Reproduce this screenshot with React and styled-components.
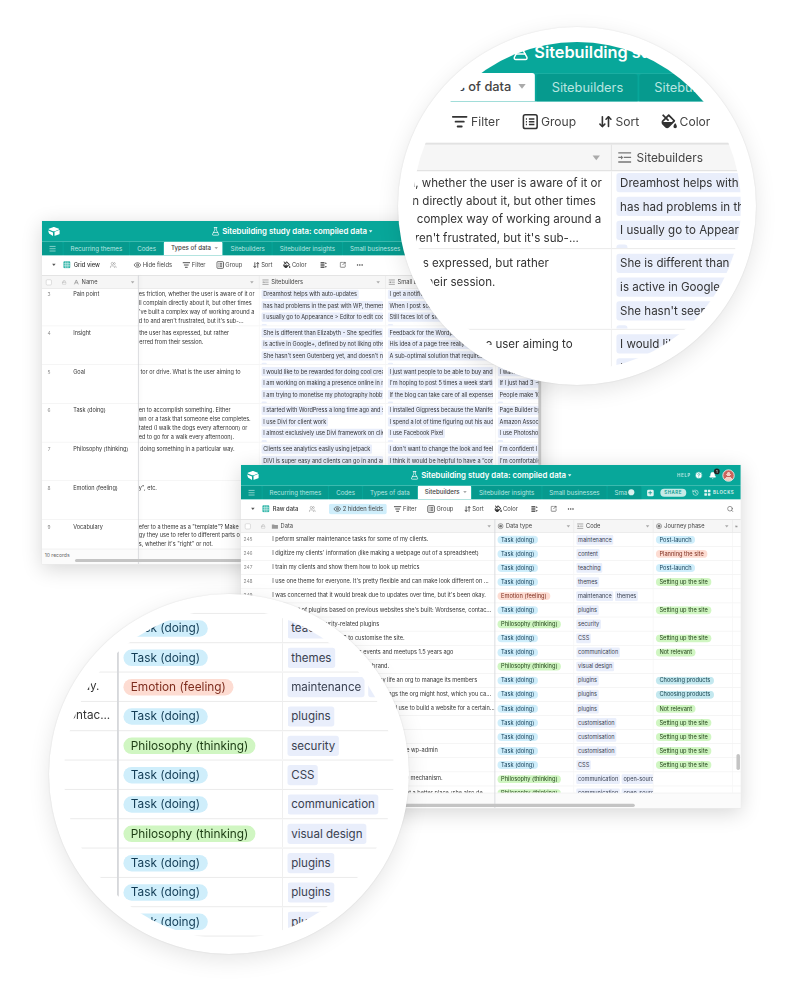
import styled, { createGlobalStyle } from "styled-components";
import {
  ArrowDownUp,
  Bell,
  CircleHelp,
  Ellipsis,
  Eye,
  FlaskConical,
  History,
  ListFilter,
  Lock,
  Menu,
  Plus,
  Search,
  SquareArrowOutUpRight,
  Users,
} from "lucide-react";
import { FaFillDrip } from "react-icons/fa";

const GlobalStyle = createGlobalStyle`
  html, body {
    margin: 0;
    background: #fff;
  }
  * {
    box-sizing: border-box;
  }
`;

const TEAL = "#08a79a";
const TAB_TEAL = "#069a8e";

const Logo = () => (
  <svg width="28" height="22" viewBox="0 0 28 22" fill="#fff">
    <path d="M12 1.200 2.500 4.800c-.7.300-.7 1.200 0 1.500l9.500 3.900c1.300.5 2.700.5 4 0l9.500-3.900c.7-.3.7-1.200 0-1.500L16 1.200c-1.300-.5-2.700-.5-4 0z" />
    <path d="M15.500 12.200v8c0 .5.500.8 1 .6l9.800-3.800c.4-.2.700-.5.700-1V8.300c0-.5-.5-.8-1-.6l-9.800 3.500c-.4.200-.7.500-.7 1z" />
    <path d="M1.200 8.500 12 13v7.200c0 .5-.6.800-1 .5L3 15.600 1 9.400c-.1-.5 0-.8.200-.9z" />
  </svg>
);

const GridIcon = () => (
  <svg width="17" height="17" viewBox="0 0 18 18">
    <rect x="0.500" y="0.500" width="17" height="17" rx="3" fill="#2fb5a8" />
    <path d="M1 6.500h16M1 11.500h16M6.500 1v16M11.500 1v16" stroke="#fff" strokeWidth="1.300" />
  </svg>
);

const GroupIcon = () => (
  <svg width="18" height="18" viewBox="0 0 18 18" fill="none" stroke="#333" strokeWidth="1.700">
    <rect x="1.500" y="1.500" width="15" height="15" rx="2" />
    <path d="M7.500 6h6M7.500 9h6M7.500 12h6M4.200 6h1.200M4.200 9h1.200M4.200 12h1.200" />
  </svg>
);

const RowHeightIcon = () => (
  <svg width="16" height="16" viewBox="0 0 16 16" fill="#444">
    <rect x="1" y="1.500" width="9" height="3" />
    <rect x="1" y="6.500" width="9" height="3" />
    <rect x="1" y="11.500" width="9" height="3" />
    <path d="M13 1.500 15.500 5h-5zM13 14.500 10.500 11h5z" />
  </svg>
);

const LinesIcon = () => (
  <svg width="16" height="14" viewBox="0 0 16 14" stroke="#777" strokeWidth="1.400" fill="#777">
    <path d="M1 2h14M7 7h8M1 12h14M1 7h4" fill="none" />
    <path d="M4 4.800 6.400 7 4 9.200z" stroke="none" />
  </svg>
);

const SelectIcon = () => (
  <svg width="14" height="14" viewBox="0 0 14 14">
    <circle cx="7" cy="7" r="5.700" fill="none" stroke="#777" strokeWidth="1.600" />
    <circle cx="7" cy="7" r="3" fill="#777" />
  </svg>
);

const TextIcon = () => (
  <svg width="14" height="14" viewBox="0 0 14 14" fill="none" stroke="#777" strokeWidth="1.300">
    <path d="M2.500 12 7 2l4.500 10M4.200 8.500h5.600" />
  </svg>
);

const AttachmentIcon = () => (
  <svg width="16" height="14" viewBox="0 0 16 14" fill="#999">
    <path d="M1 3h5l1.500 1.500H15V13H1z" />
  </svg>
);

const Stage = styled.main`
  position: relative;
  width: 800px;
  height: 1000px;
  overflow: hidden;
  background: #fff;
`;

const Win = styled.section`
  position: absolute;
  left: ${(p) => p.$x}px;
  top: ${(p) => p.$y}px;
  z-index: ${(p) => p.$z || 0};
  width: 1136px;
  height: 780px;
  display: flex;
  flex-direction: column;
  overflow: hidden;
  background: #fff;
  transform: scale(${(p) => p.$scale});
  transform-origin: 0 0;
  outline: 1px solid #e4e4e4;
  box-shadow: 0 10px 44px rgba(0, 0, 0, 0.16);
  filter: blur(${(p) => p.$blur}px);
  font-family: Inter, "Liberation Sans", sans-serif;
  font-size: 12.600px;
  color: #333;
`;

const TopBar = styled.header`
  height: 47px;
  flex: none;
  background: ${TEAL};
  color: #fff;
  display: grid;
  grid-template-columns: 1fr auto 1fr;
  align-items: center;
  padding: 0 14px 0 13px;
`;

const Title = styled.h1`
  margin: 0;
  display: flex;
  align-items: center;
  gap: 4px;
  font-size: 17.800px;
  font-weight: 600;
  white-space: nowrap;
`;

const TopActions = styled.div`
  display: flex;
  align-items: center;
  justify-content: flex-end;
  gap: 13px;
`;

const HelpLabel = styled.span`
  margin-right: -5px;
  font-size: 10px;
  font-weight: 600;
  letter-spacing: 1.500px;
  opacity: 0.75;
`;

const BellWrap = styled.span`
  position: relative;
  display: flex;
`;

const BellBadge = styled.span`
  position: absolute;
  top: -7px;
  right: -7px;
  width: 13px;
  height: 13px;
  border-radius: 50%;
  background: #222;
  color: #fff;
  font-size: 9px;
  line-height: 13px;
  text-align: center;
`;

const Avatar = styled.span`
  width: 28px;
  height: 28px;
  border-radius: 50%;
  border: 2px solid #e9f3ef;
  background: radial-gradient(circle at 50% 38%, #f0cfc4 0 24%, transparent 25%),
    radial-gradient(circle at 50% 105%, #f0cfc4 0 38%, transparent 39%), #c9635c;
`;

const TabBar = styled.nav`
  height: 31px;
  flex: none;
  background: ${TEAL};
  display: flex;
  align-items: flex-end;
  gap: 2px;
  overflow: hidden;
`;

const MenuTab = styled.div`
  width: 47px;
  height: 30px;
  flex: none;
  background: ${TAB_TEAL};
  border-radius: 0 3px 0 0;
  color: #c4ebe6;
  display: flex;
  align-items: center;
  justify-content: center;
`;

const Tab = styled.div`
  height: ${(p) => (p.$active ? 31 : 30)}px;
  flex: none;
  display: flex;
  align-items: center;
  gap: 8px;
  padding: 0 ${(p) => (p.$active ? 10 : 16)}px 2px 16px;
  border-radius: 3px 3px 0 0;
  font-size: 14px;
  white-space: nowrap;
  background: ${(p) => (p.$active ? "#fff" : TAB_TEAL)};
  color: ${(p) => (p.$active ? "#444" : "#b9e6e1")};
  font-weight: ${(p) => (p.$active ? 500 : 400)};
`;

const OverflowDot = styled.span`
  width: 14px;
  height: 14px;
  margin-left: -6px;
  border-radius: 50%;
  background: #d8f1ee;
`;

const TabActions = styled.div`
  margin-left: auto;
  height: 30px;
  flex: none;
  display: flex;
  align-items: center;
  gap: 12px;
  padding: 0 15px 0 10px;
  color: #e2f5f3;
  font-size: 10px;
  font-weight: 600;
  letter-spacing: 1.300px;
`;

const AddTab = styled.span`
  width: 15px;
  height: 15px;
  border-radius: 3px;
  background: #e2f5f3;
  color: ${TAB_TEAL};
  display: flex;
  align-items: center;
  justify-content: center;
`;

const SharePill = styled.span`
  width: 59px;
  height: 18px;
  margin: 0 1px 0 3px;
  border-radius: 9px;
  background: #c6ebe7;
  color: ${TAB_TEAL};
  line-height: 18px;
  text-align: center;
`;

const BlocksDots = styled.span`
  display: grid;
  grid-template-columns: 6px 6px;
  gap: 2px;
  margin-right: -6px;
  & > i {
    height: 6px;
    background: #e2f5f3;
    border-radius: 1px;
  }
`;

const ToolBar = styled.div`
  height: 45px;
  flex: none;
  display: flex;
  align-items: center;
  gap: 8px;
  padding: 0 16px 2px 23px;
  color: #444;
  font-size: 13.200px;
  white-space: nowrap;
`;

const ViewPicker = styled.div`
  width: 169px;
  flex: none;
  display: flex;
  align-items: center;
  color: #333;
  font-weight: 500;
`;

const ViewName = styled.span`
  width: 82px;
  margin-left: 7px;
`;

const ToolItem = styled.div`
  height: 24px;
  display: flex;
  align-items: center;
  gap: 3px;
  margin-left: ${(p) => (p.$on ? 0 : 0)}px;
  padding: 0 ${(p) => p.$pad ?? 8}px 0 ${(p) => (p.$on ? 10 : p.$pad ?? 8)}px;
  border-radius: 4px;
  background: ${(p) => (p.$on ? "#cfeefb" : "transparent")};
`;

const SearchSlot = styled.div`
  margin-left: auto;
  display: flex;
  color: #555;
`;

const Caret = styled.span`
  flex: none;
  width: 0;
  height: 0;
  margin-left: ${(p) => (p.$push ? "auto" : 0)};
  margin-right: ${(p) => p.$right || 0}px;
  border-left: 4px solid transparent;
  border-right: 4px solid transparent;
  border-top: 5px solid ${(p) => p.$color || "#aaa"};
`;

const HeaderRow = styled.div`
  height: 31px;
  flex: none;
  display: flex;
  background: #f6f6f6;
  border-top: 2px solid #e2e2e2;
  border-bottom: 1px solid #dcdcdc;
  font-size: 13px;
`;

const HeaderCell = styled.div`
  width: ${(p) => p.$w}px;
  flex: none;
  display: flex;
  align-items: center;
  gap: 5px;
  padding: 0 ${(p) => p.$pad ?? 6}px;
  border-right: 1px solid ${(p) => (p.$plain ? "transparent" : "#e2e2e2")};
  color: #444;
  white-space: nowrap;
  overflow: hidden;
`;

const CheckBox = styled.span`
  width: 13px;
  height: 13px;
  flex: none;
  margin-left: 3px;
  margin-right: 18px;
  border: 1.500px solid #bbb;
  border-radius: 3px;
  background: #fff;
`;

const HeadLock = styled(Lock)`
  flex: none;
  margin-right: ${(p) => p.$right || 0}px;
`;

const Body = styled.div`
  flex: 1;
  min-height: 0;
  overflow: hidden;
`;

const RowList = styled.div`
  margin-top: ${(p) => p.$offset || 0}px;
`;

const Row = styled.div`
  height: ${(p) => p.$h}px;
  display: flex;
  border-bottom: 1.500px solid #e9e9e9;
  overflow: hidden;
`;

const NumCell = styled.div`
  width: 32px;
  flex: none;
  margin-right: 31px;
  padding-top: ${(p) => p.$top || 0}px;
  text-align: center;
  font-size: 11px;
  line-height: ${(p) => p.$lh}px;
  color: #8a8a8a;
`;

const NameCell = styled.div`
  width: 156px;
  flex: none;
  padding: 6px 8px;
  line-height: 20px;
  color: #333;
`;

const TextCell = styled.div`
  width: ${(p) => p.$w}px;
  flex: none;
  padding: 6px 0 0 1px;
  border-right: 1px solid #eee;
  overflow: hidden;
  line-height: 20px;
  white-space: nowrap;
`;

const TextLine = styled.span`
  display: block;
  padding-left: ${(p) => p.$indent || 0}px;
`;

const LinkCell = styled.div`
  width: ${(p) => p.$w}px;
  flex: none;
  display: flex;
  flex-direction: column;
  align-items: flex-start;
  gap: 5px;
  padding: 5px 5px;
  border-right: 1px solid #eee;
  overflow: hidden;
`;

const LinkPill = styled.span`
  max-width: 100%;
  height: 21px;
  flex: none;
  padding: 0 4px;
  border-radius: 3px;
  background: #e9eefb;
  line-height: 21px;
  white-space: nowrap;
  overflow: hidden;
  color: #333;
`;

const DataCell = styled.div`
  width: 514px;
  flex: none;
  padding: 0 8px;
  font-size: 12.750px;
  line-height: 30px;
  white-space: nowrap;
  overflow: hidden;
  color: #333;
`;

const TagCell = styled.div`
  width: 180px;
  flex: none;
  display: flex;
  align-items: center;
  gap: 4px;
  padding: 0 ${(p) => p.$pad}px;
  border-right: 1px solid #eee;
  overflow: hidden;
`;

const toneColors = {
  blue: ["#cfeefb", "#123c55"],
  green: ["#d0f6c2", "#1d3d14"],
  red: ["#fddcd2", "#7e2d1e"],
  teal: ["#c3e8ef", "#123f4a"],
};

const Chip = styled.span`
  height: 18px;
  flex: none;
  padding: 0 8px;
  border-radius: 9px;
  font-size: 12.900px;
  line-height: 18px;
  white-space: nowrap;
  background: ${(p) => toneColors[p.$tone][0]};
  color: ${(p) => toneColors[p.$tone][1]};
`;

const CodePill = styled.span`
  height: 22px;
  flex: none;
  padding: 0 4px;
  border-radius: 3px;
  background: #e9eefb;
  line-height: 22px;
  white-space: nowrap;
  color: #3a4150;
`;

const Footer = styled.footer`
  height: 35px;
  flex: none;
  padding: 6px;
  background: #fbfbfb;
  border-top: 1px solid #e6e6e6;
  color: #666;
  font-size: 11.500px;
`;

const FrozenEdge = styled.div`
  position: absolute;
  left: ${(p) => p.$x}px;
  top: 123px;
  bottom: 0;
  width: 1.500px;
  background: #d6d8db;
  box-shadow: ${(p) => (p.$soft ? "3px 0 8px rgba(0, 0, 0, 0.08)" : "none")};
`;

const ScrollThumb = styled.div`
  position: absolute;
  left: ${(p) => p.$x}px;
  top: ${(p) => p.$y}px;
  width: ${(p) => p.$w}px;
  height: ${(p) => p.$h}px;
  border-radius: 4px;
  background: #c4c4c4;
`;

const Lens = styled.div`
  position: absolute;
  left: ${(p) => p.$x}px;
  top: ${(p) => p.$y}px;
  z-index: 5;
  width: ${(p) => p.$size}px;
  height: ${(p) => p.$size}px;
  padding: 15px;
  border-radius: 50%;
  background: #fff;
  box-shadow: 0 0 2px rgba(0, 0, 0, 0.12), 0 6px 22px rgba(0, 0, 0, 0.1);
`;

const LensView = styled.div`
  position: relative;
  width: 100%;
  height: 100%;
  border-radius: 50%;
  overflow: hidden;
`;

const tabNames = ["Recurring themes", "Codes", "Types of data", "Sitebuilders", "Sitebuilder insights", "Small businesses"];

const Header = ({ active }) => (
  <>
    <TopBar>
      <Logo />
      <Title>
        <FlaskConical size={21} strokeWidth={1.800} />
        <span>Sitebuilding study data: compiled data</span>
        <Caret $color="#e8f7f5" />
      </Title>
      <TopActions>
        <HelpLabel>HELP</HelpLabel>
        <CircleHelp size={19} fill="#fff" stroke={TEAL} />
        <BellWrap>
          <Bell size={18} fill="#fff" strokeWidth={1.500} />
          <BellBadge>1</BellBadge>
        </BellWrap>
        <Avatar />
      </TopActions>
    </TopBar>
    <TabBar>
      <MenuTab>
        <Menu size={18} />
      </MenuTab>
      {tabNames.map((name) => (
        <Tab key={name} $active={name === active}>
          {name}
          {name === active && <Caret />}
        </Tab>
      ))}
      <Tab>
        Sma
        <OverflowDot />
      </Tab>
      <TabActions>
        <AddTab>
          <Plus size={12} strokeWidth={3.500} />
        </AddTab>
        <SharePill>SHARE</SharePill>
        <History size={16} />
        <BlocksDots>
          <i />
          <i />
          <i />
          <i />
        </BlocksDots>
        <span>BLOCKS</span>
      </TabActions>
    </TabBar>
  </>
);

const Tools = ({ view, hidden, withSearch }) => (
  <ToolBar>
    <ViewPicker>
      <Caret $color="#555" $right={17} />
      <GridIcon />
      <ViewName>{view}</ViewName>
      <Users size={16} color="#999" />
    </ViewPicker>
    <ToolItem $on={hidden}>
      <Eye size={18} />
      {hidden ? "2 hidden fields" : "Hide fields"}
    </ToolItem>
    <ToolItem>
      <ListFilter size={18} strokeWidth={2.600} color="#333" />
      Filter
    </ToolItem>
    <ToolItem>
      <GroupIcon />
      Group
    </ToolItem>
    <ToolItem>
      <ArrowDownUp size={16} strokeWidth={2.600} color="#333" />
      Sort
    </ToolItem>
    <ToolItem>
      <FaFillDrip size={17} color="#333" />
      Color
    </ToolItem>
    <ToolItem $pad={14}>
      <RowHeightIcon />
    </ToolItem>
    <ToolItem $pad={6}>
      <SquareArrowOutUpRight size={15} strokeWidth={2.200} />
    </ToolItem>
    <ToolItem $pad={8}>
      <Ellipsis size={18} />
    </ToolItem>
    {withSearch && (
      <SearchSlot>
        <Search size={16} />
      </SearchSlot>
    )}
  </ToolBar>
);

const typeRows = [
  { num: 3, name: "Pain point", lines: ["es friction, whether the user is aware of it or", "ll complain directly about it, but other times", "'ve built a complex way of working around a", "d to and aren't frustrated, but it's sub-..."],
    a: ["Dreamhost helps with auto-updates", "has had problems in the past with WP, themes and plugins", "I usually go to Appearance > Editor to edit code in the theme", "\u00a0"],
    b: ["I get a notification when something breaks on the site", "When I post something new it goes to social media", "Still faces lot of small issues with the theme", "\u00a0"],
    c: ["I spend too long on it", "It is hard to find", "Nothing works well", "\u00a0"] },
  { num: 4, name: "Insight", indent: 1, lines: ["the user has expressed, but rather", "erred from their session."],
    a: ["She is different than Elizabyth - She specifies what she wants", "is active in Google+, defined by not liking other networks", "She hasn't seen Gutenberg yet, and doesn't need it for now", "\u00a0"],
    b: ["Feedback for the Wordpress editor is that it is hard", "His idea of a page tree really helps to organise things", "A sub-optimal solution that requires a lot of manual work", "\u00a0"],
    c: ["There is no way to do this", "It takes a lot of time", "Page tree is better", "\u00a0"] },
  { num: 5, name: "Goal", indent: 4, lines: ["tor or drive. What is the user aiming to"],
    a: ["I would like to be rewarded for doing cool creative work", "I am working on making a presence online in my own town", "I am trying to monetise my photography hobby this year", "\u00a0"],
    b: ["I just want people to be able to buy and book online", "I'm hoping to post 5 times a week starting next month", "If the blog can take care of all expenses that is enough", "\u00a0"],
    c: ["I want a shop", "If I just had 3 -> 5 clients", "People make 10k from this", "\u00a0"] },
  { num: 6, name: "Task (doing)", lines: ["en to accomplish something. Either", "wn or a task that someone else completes.", "tated (I walk the dogs every afternoon) or", "ed to go for a walk every afternoon)."],
    a: ["I started with WordPress a long time ago and stayed since", "I use Divi for client work", "I almost exclusively use Divi framework on client sites", "\u00a0"],
    b: ["I installed Gigpress because the Manifest theme needed it", "I spend a lot of time figuring out his audience and posts", "I use Facebook Pixel", "\u00a0"],
    c: ["Page Builder by SiteOrigin", "Amazon Associates links", "I use Photoshop for this", "\u00a0"] },
  { num: 7, name: "Philosophy (thinking)", indent: 3, lines: ["doing something in a particular way."],
    a: ["Clients see analytics easily using jetpack", "DIVI is super easy and clients can go in and add pages", "I prefer to keep things simple for every client I have"],
    b: ["I don't want to change the look and feel of the site", "I think it would be helpful to have a \u201ccontent\u201d section", "Simple is better"],
    c: ["I'm confident I can do it", "I'm comfortable with it", "Fine"] },
  { num: 8, name: "Emotion (feeling)", lines: ["y\", etc."], a: [], b: [], c: [] },
  { num: 9, name: "Vocabulary", lines: ["efer to a theme as a \"template\"? Make", "gy they use to refer to different parts o", "s, whether it's \"right\" or not."], a: [], b: [], c: [] },
];

const TASK = ["blue", "Task (doing)"];
const THINK = ["green", "Philosophy (thinking)"];
const FEEL = ["red", "Emotion (feeling)"];
const SETUP = ["green", "Setting up the site"];
const POST = ["blue", "Post-launch"];
const PLAN = ["red", "Planning the site"];
const IRRELEVANT = ["green", "Not relevant"];
const CHOOSE = ["teal", "Choosing products"];

const dataRows = [
  [245, "I peform smaller maintenance tasks for some of my clients.", TASK, ["maintenance"], POST],
  [246, "I digitize my clients' information (like making a webpage out of a spreadsheet)", TASK, ["content"], PLAN],
  [247, "I train my clients and show them how to look up metrics", TASK, ["teaching"], POST],
  [248, "I use one theme for everyone. It's pretty flexible and can make look different on ...", TASK, ["themes"], SETUP],
  [249, "I was concerned that it would break due to updates over time, but it's been okay.", FEEL, ["maintenance", "themes"], null],
  [250, "Uses a set of plugins based on previous websites she's built: Wordsense, contac...", TASK, ["plugins"], SETUP],
  [251, "She also installs security-related plugins", THINK, ["security"], null],
  [252, "She uses some custom CSS to customise the site.", TASK, ["CSS"], SETUP],
  [253, "I started going to local WordPress events and meetups 1.5 years ago", TASK, ["communication"], IRRELEVANT],
  [254, "I like to keep the design clean and on brand.", THINK, ["visual design"], null],
  [255, "I set up a plugin that helps with day-to-day life an org to manage its members", TASK, ["plugins"], CHOOSE],
  [256, "I search for plugins related to events and things the org might host, which you ca...", TASK, ["plugins"], CHOOSE],
  [257, "I look through the directory to see what I would use to build a website for a certain...", TASK, ["plugins"], IRRELEVANT],
  [258, "I customise the header for each client", TASK, ["customisation"], SETUP],
  [259, "I customise the footer for each client", TASK, ["customisation"], SETUP],
  [260, "I customise the login page and the dashboard in the wp-admin", TASK, ["customisation"], SETUP],
  [261, "I add small tweaks through custom styles", TASK, ["CSS"], SETUP],
  [262, "WordPress has a really good and strong community mechanism.", THINK, ["communication", "open-source"], null],
  [263, "I wanted to help people and make the whole internet a better place (she also de...", THINK, ["communication", "open-source"], null],
];

const TypesWindow = (props) => (
  <Win {...props}>
    <Header active="Types of data" />
    <Tools view="Grid view" />
    <HeaderRow>
      <HeaderCell $w={219}>
        <CheckBox />
        <HeadLock size={11} color="#aaa" $right={10} />
        <TextIcon />
        Name
        <Caret $push $right={2} />
      </HeaderCell>
      <HeaderCell $w={275}>
        <Caret $push $right={6} />
      </HeaderCell>
      <HeaderCell $w={287}>
        <LinesIcon />
        Sitebuilders
        <Caret $push $right={6} />
      </HeaderCell>
      <HeaderCell $w={250}>
        <LinesIcon />
        Small businesses
        <Caret $push $right={6} />
      </HeaderCell>
      <HeaderCell $w={105} $plain>
        <LinesIcon />
      </HeaderCell>
    </HeaderRow>
    <Body>
      <RowList $offset={-3}>
        {typeRows.map((row) => (
          <Row key={row.num} $h={88}>
            <NumCell $lh={20} $top={6}>
              {row.num}
            </NumCell>
            <NameCell>{row.name}</NameCell>
            <TextCell $w={275}>
              {row.lines.map((line) => (
                <TextLine key={line} $indent={row.indent}>
                  {line}
                </TextLine>
              ))}
            </TextCell>
            <LinkCell $w={287}>
              {row.a.map((text, i) => (
                <LinkPill key={i}>{text}</LinkPill>
              ))}
            </LinkCell>
            <LinkCell $w={250}>
              {row.b.map((text, i) => (
                <LinkPill key={i}>{text}</LinkPill>
              ))}
            </LinkCell>
            <LinkCell $w={105}>
              {row.c.map((text, i) => (
                <LinkPill key={i}>{text}</LinkPill>
              ))}
            </LinkCell>
          </Row>
        ))}
      </RowList>
    </Body>
    <Footer>10 records</Footer>
    <FrozenEdge $x={218} $soft />
    <ScrollThumb $x={75} $y={768} $w={420} $h={7} />
    <ScrollThumb $x={1128} $y={340} $w={7} $h={300} />
  </Win>
);

const DataWindow = (props) => (
  <Win {...props}>
    <Header active="Sitebuilders" />
    <Tools view="Raw data" hidden withSearch />
    <HeaderRow>
      <HeaderCell $w={63} $plain>
        <CheckBox />
        <HeadLock size={11} color="#aaa" />
      </HeaderCell>
      <HeaderCell $w={514} $plain>
        <AttachmentIcon />
        Data
        <Caret $push $right={2} />
      </HeaderCell>
      <HeaderCell $w={180}>
        <SelectIcon />
        Data type
        <Caret $push $right={2} />
      </HeaderCell>
      <HeaderCell $w={180}>
        <LinesIcon />
        Code
        <Caret $push $right={2} />
      </HeaderCell>
      <HeaderCell $w={180}>
        <SelectIcon />
        Journey phase
        <Caret $push $right={2} />
      </HeaderCell>
      <HeaderCell $w={19} $plain>
        <AttachmentIcon />
      </HeaderCell>
    </HeaderRow>
    <Body>
      <RowList>
        {dataRows.map(([num, text, type, codes, phase]) => (
          <Row key={num} $h={32}>
            <NumCell $lh={30}>{num}</NumCell>
            <DataCell>{text}</DataCell>
            <TagCell $pad={6}>
              <Chip $tone={type[0]}>{type[1]}</Chip>
            </TagCell>
            <TagCell $pad={5}>
              {codes.map((code) => (
                <CodePill key={code}>{code}</CodePill>
              ))}
            </TagCell>
            <TagCell $pad={6}>{phase && <Chip $tone={phase[0]}>{phase[1]}</Chip>}</TagCell>
          </Row>
        ))}
      </RowList>
    </Body>
    <Footer />
    <FrozenEdge $x={576} />
    <ScrollThumb $x={80} $y={770} $w={815} $h={7} />
    <ScrollThumb $x={1126} $y={657} $w={8} $h={36} />
  </Win>
);

const App = () => (
  <Stage>
    <GlobalStyle />
    <TypesWindow $x={42} $y={221} $scale={0.44} $blur={0.6} />
    <DataWindow $x={241} $y={465} $scale={0.44} $z={1} $blur={0.6} />
    <Lens $x={398} $y={27} $size={358}>
      <LensView>
        <TypesWindow $x={-254.5} $y={-11.6} $scale={0.9167} $blur={0.25} />
      </LensView>
    </Lens>
    <Lens $x={49} $y={594} $size={360}>
      <LensView>
        <DataWindow $x={-475} $y={-195} $scale={0.9167} $blur={0.25} />
      </LensView>
    </Lens>
  </Stage>
);

export default App;
